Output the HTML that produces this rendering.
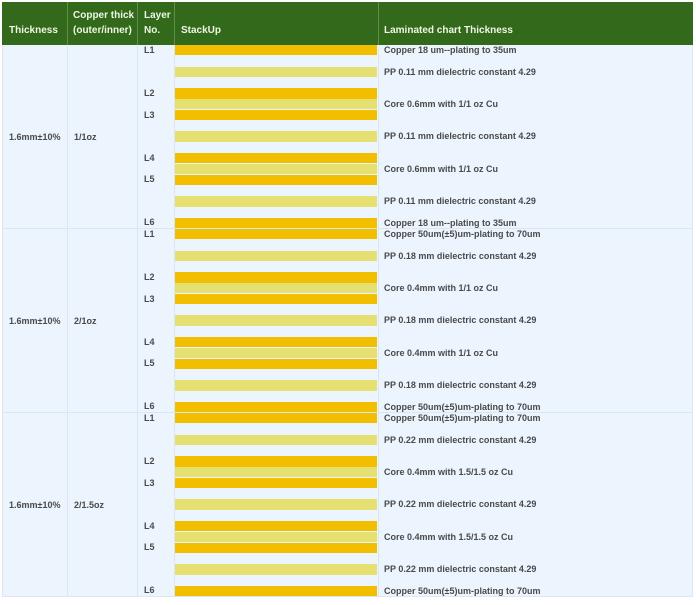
<!DOCTYPE html>
<html><head><meta charset="utf-8"><style>
*{margin:0;padding:0;box-sizing:border-box}
body{width:696px;height:605px;background:#fff;position:relative;overflow:hidden;font-family:"Liberation Sans",sans-serif;font-weight:bold;font-size:9px;color:#4a4a4a}
.tbl{position:absolute;left:2px;top:2px;width:691px;height:595px;background:#ecf4fe;border:1px solid #dde8f4}
.hd{position:absolute;left:2px;top:2px;width:691px;height:43px;background:#33691a}
.hc{position:absolute;color:#eef6e6;font-size:10px;line-height:15px}
.vl{position:absolute;width:1px;background:#5f8f48;top:2px;height:43px}
.bl{position:absolute;width:1px;background:#dbe6f3;top:45px;height:552px}
.hl{position:absolute;left:2px;width:691px;height:1px;background:#dbe6f3}
.b{position:absolute;left:175px;width:202px;height:10.4px}
.c{background:#f2bf00}
.p{background:#e6e072}
.l{position:absolute;left:144px;line-height:10px}
.t{position:absolute;left:384px;line-height:10.8px}
.s{position:absolute;line-height:12px}
</style></head><body>
<div class="tbl"></div>
<div class="hd"></div>
<div class="vl" style="left:67px"></div><div class="vl" style="left:137px"></div><div class="vl" style="left:174px"></div><div class="vl" style="left:378px"></div>
<div class="bl" style="left:67px"></div><div class="bl" style="left:137px"></div><div class="bl" style="left:174px"></div><div class="bl" style="left:378px"></div>
<div class="hc" style="left:9px;top:23px">Thickness</div>
<div class="hc" style="left:73px;top:8px">Copper thick<br>(outer/inner)</div>
<div class="hc" style="left:144px;top:8px">Layer<br>No.</div>
<div class="hc" style="left:181px;top:23px">StackUp</div>
<div class="hc" style="left:384px;top:23px">Laminated chart Thickness</div>

<div class="hl" style="top:228px"></div><div class="hl" style="top:412px"></div>

<div class="s" style="left:9px;top:131px">1.6mm±10%</div><div class="s" style="left:74px;top:131px">1/1oz</div>
<div class="b c" style="top:45px"></div><div class="b p" style="top:66.6px"></div>
<div class="b c" style="top:88.2px"></div><div class="b p" style="top:99px"></div><div class="b c" style="top:109.8px"></div>
<div class="b p" style="top:131.4px"></div>
<div class="b c" style="top:153px"></div><div class="b p" style="top:163.8px"></div><div class="b c" style="top:174.6px"></div>
<div class="b p" style="top:196.2px"></div><div class="b c" style="top:217.8px"></div>
<div class="l" style="top:45px">L1</div><div class="l" style="top:88px">L2</div><div class="l" style="top:110px">L3</div><div class="l" style="top:153px">L4</div><div class="l" style="top:174px">L5</div><div class="l" style="top:217px">L6</div>
<div class="t" style="top:45px">Copper 18 um--plating to 35um</div>
<div class="t" style="top:66.6px">PP 0.11 mm dielectric constant 4.29</div>
<div class="t" style="top:99px">Core 0.6mm with 1/1 oz Cu</div>
<div class="t" style="top:131.4px">PP 0.11 mm dielectric constant 4.29</div>
<div class="t" style="top:163.8px">Core 0.6mm with 1/1 oz Cu</div>
<div class="t" style="top:196.2px">PP 0.11 mm dielectric constant 4.29</div>
<div class="t" style="top:217.8px">Copper 18 um--plating to 35um</div>

<div class="s" style="left:9px;top:315px">1.6mm±10%</div><div class="s" style="left:74px;top:315px">2/1oz</div>
<div class="b c" style="top:229px"></div><div class="b p" style="top:250.6px"></div>
<div class="b c" style="top:272.2px"></div><div class="b p" style="top:283px"></div><div class="b c" style="top:293.8px"></div>
<div class="b p" style="top:315.4px"></div>
<div class="b c" style="top:337px"></div><div class="b p" style="top:347.8px"></div><div class="b c" style="top:358.6px"></div>
<div class="b p" style="top:380.2px"></div><div class="b c" style="top:401.8px"></div>
<div class="l" style="top:229px">L1</div><div class="l" style="top:272px">L2</div><div class="l" style="top:294px">L3</div><div class="l" style="top:337px">L4</div><div class="l" style="top:358px">L5</div><div class="l" style="top:401px">L6</div>
<div class="t" style="top:229px">Copper 50um(±5)um-plating to 70um</div>
<div class="t" style="top:250.6px">PP 0.18 mm dielectric constant 4.29</div>
<div class="t" style="top:283px">Core 0.4mm with 1/1 oz Cu</div>
<div class="t" style="top:315.4px">PP 0.18 mm dielectric constant 4.29</div>
<div class="t" style="top:347.8px">Core 0.4mm with 1/1 oz Cu</div>
<div class="t" style="top:380.2px">PP 0.18 mm dielectric constant 4.29</div>
<div class="t" style="top:401.8px">Copper 50um(±5)um-plating to 70um</div>

<div class="s" style="left:9px;top:499px">1.6mm±10%</div><div class="s" style="left:74px;top:499px">2/1.5oz</div>
<div class="b c" style="top:413px"></div><div class="b p" style="top:434.6px"></div>
<div class="b c" style="top:456.2px"></div><div class="b p" style="top:467px"></div><div class="b c" style="top:477.8px"></div>
<div class="b p" style="top:499.4px"></div>
<div class="b c" style="top:521px"></div><div class="b p" style="top:531.8px"></div><div class="b c" style="top:542.6px"></div>
<div class="b p" style="top:564.2px"></div><div class="b c" style="top:585.8px"></div>
<div class="l" style="top:413px">L1</div><div class="l" style="top:456px">L2</div><div class="l" style="top:478px">L3</div><div class="l" style="top:521px">L4</div><div class="l" style="top:542px">L5</div><div class="l" style="top:585px">L6</div>
<div class="t" style="top:413px">Copper 50um(±5)um-plating to 70um</div>
<div class="t" style="top:434.6px">PP 0.22 mm dielectric constant 4.29</div>
<div class="t" style="top:467px">Core 0.4mm with 1.5/1.5 oz Cu</div>
<div class="t" style="top:499.4px">PP 0.22 mm dielectric constant 4.29</div>
<div class="t" style="top:531.8px">Core 0.4mm with 1.5/1.5 oz Cu</div>
<div class="t" style="top:564.2px">PP 0.22 mm dielectric constant 4.29</div>
<div class="t" style="top:585.8px">Copper 50um(±5)um-plating to 70um</div>
</body></html>
